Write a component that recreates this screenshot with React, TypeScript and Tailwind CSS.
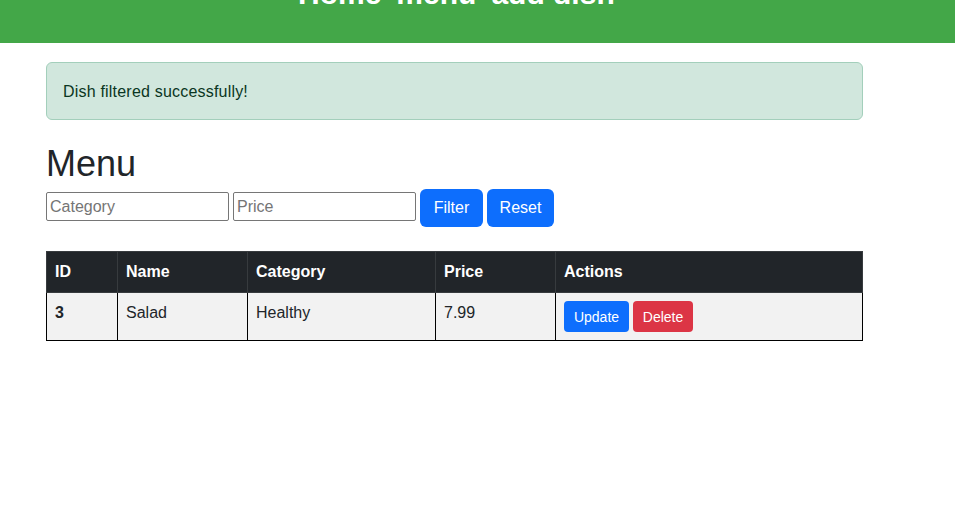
import React from 'react';

const font = { fontFamily: '"Liberation Sans", Arial, sans-serif' };

export default function App() {
  return (
    <div className="bg-white min-h-screen text-[#212529]" style={font}>
      <div className="h-[43px] bg-[#43a748] overflow-hidden">
        <div className="flex gap-[15px] pl-[298px] -mt-[28px] text-[30px] leading-[43px] font-bold text-white">
          <span>Home</span>
          <span>menu</span>
          <span>add dish</span>
        </div>
      </div>

      <div className="ml-[46px] w-[817px]">
        <div className="mt-[19px] rounded-md border border-[#a3cfbb] bg-[#d1e7dd] px-4 pt-[17px] pb-[15px] text-base leading-6 tracking-[0.2px] text-[#0a3622]">
          Dish filtered successfully!
        </div>

        <h1 className="mt-[22px] mb-[4px] text-[36px] font-medium leading-[1.2]">Menu</h1>

        <div className="flex items-center gap-1">
          <input
            className="mt-[-3px] h-[29px] w-[183px] rounded-[2px] border border-[#767676] px-[3px] text-base placeholder:text-[#757575]"
            placeholder="Category"
          />
          <input
            className="mt-[-3px] h-[29px] w-[183px] rounded-[2px] border border-[#767676] px-[3px] text-base placeholder:text-[#757575]"
            placeholder="Price"
          />
          <button className="h-[38px] w-[63px] rounded-md bg-[#0d6efd] text-base text-white">Filter</button>
          <button className="h-[38px] w-[67px] rounded-md bg-[#0d6efd] text-base text-white">Reset</button>
        </div>

        <table className="mt-6 w-full border-collapse text-base leading-6">
          <thead>
            <tr className="bg-[#212529] text-white">
              <th className="w-[71px] border border-[#373b3e] p-2 text-left font-bold">ID</th>
              <th className="w-[130px] border border-[#373b3e] p-2 text-left font-bold">Name</th>
              <th className="w-[188px] border border-[#373b3e] p-2 text-left font-bold">Category</th>
              <th className="w-[120px] border border-[#373b3e] p-2 text-left font-bold">Price</th>
              <th className="border border-[#373b3e] p-2 text-left font-bold">Actions</th>
            </tr>
          </thead>
          <tbody>
            <tr className="bg-[#f2f2f2]">
              <td className="border border-black p-2 align-top font-bold">3</td>
              <td className="border border-black p-2 align-top">Salad</td>
              <td className="border border-black p-2 align-top">Healthy</td>
              <td className="border border-black p-2 align-top">7.99</td>
              <td className="border border-black p-2 align-top">
                <div className="flex gap-1">
                  <button className="h-[31px] w-[65px] rounded bg-[#0d6efd] text-sm text-white">Update</button>
                  <button className="h-[31px] w-[60px] rounded bg-[#dc3545] text-sm text-white">Delete</button>
                </div>
              </td>
            </tr>
          </tbody>
        </table>
      </div>
    </div>
  );
}
